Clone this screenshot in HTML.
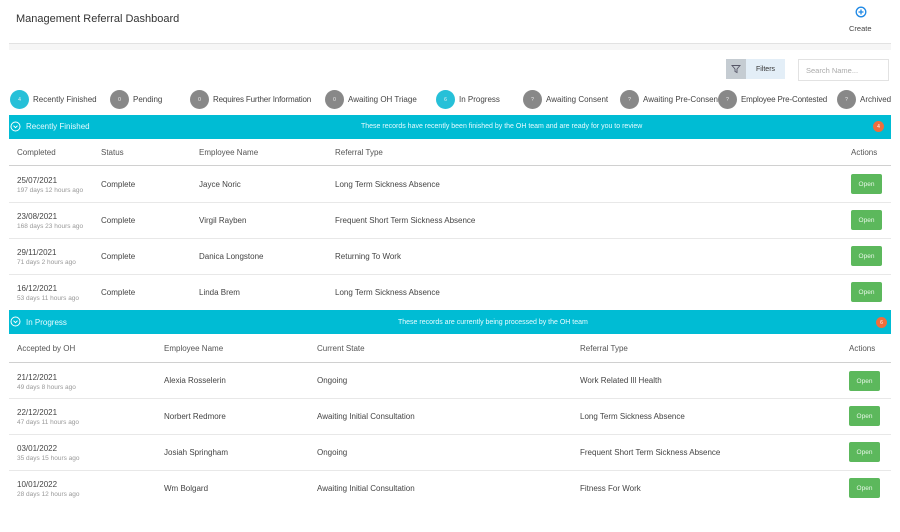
<!DOCTYPE html>
<html><head><meta charset="utf-8"><style>
*{margin:0;padding:0;box-sizing:border-box}
body{width:900px;height:532px;background:#fff;font-family:"Liberation Sans",Arial,sans-serif;color:#333;position:relative;overflow:hidden}
.a{position:absolute;white-space:nowrap}
.t{font-size:8px;color:#444}
.s{font-size:6.5px;color:#999}
.h{font-size:8px;color:#555}
.bar{position:absolute;left:9px;width:882px;height:24px;background:#00bcd4;color:#e6fbff;font-size:8px}
.line{position:absolute;left:9px;width:882px;height:1px;background:#e8e8e8}
.btn{position:absolute;width:31px;height:20px;background:#5cb85c;color:#e8f7e8;font-size:6.5px;display:flex;align-items:center;justify-content:center;border-radius:2px}
.c{position:absolute;width:19px;height:19px;border-radius:50%;color:#eee;font-size:5px;display:flex;align-items:center;justify-content:center}
.g{background:#888}.b{background:#26c0d8}
.badge{position:absolute;width:11px;height:11px;border-radius:50%;background:#ef6e3c;color:#fff;font-size:5px;display:flex;align-items:center;justify-content:center}
</style></head><body>
<div class="a" style="left:16px;top:13px;font-size:11px;color:#333">Management Referral Dashboard</div>
<svg class="a" style="left:855px;top:6px" width="12" height="12" viewBox="0 0 12 12"><circle cx="6" cy="6" r="4.8" fill="none" stroke="#1e88e5" stroke-width="1.3"/><path d="M6 3.5v5M3.5 6h5" stroke="#1e88e5" stroke-width="1.3"/></svg>
<div class="a" style="left:849px;top:24px;font-size:7.5px;color:#444">Create</div>
<div class="a" style="left:9px;top:43px;width:882px;height:1px;background:#e2e2e2"></div>
<div class="a" style="left:9px;top:44px;width:882px;height:6px;background:#f6f6f6"></div>

<div class="a" style="left:726px;top:59px;width:20px;height:20px;background:#c5ccd2"></div>
<svg class="a" style="left:731px;top:64px" width="10" height="10" viewBox="0 0 10 10"><path d="M1 1.5h8L6 5v3.5L4 7.5V5z" fill="none" stroke="#556" stroke-width="0.9"/></svg>
<div class="a" style="left:746px;top:59px;width:39px;height:20px;background:#e3eef7;font-size:7px;color:#333;display:flex;align-items:center;justify-content:center">Filters</div>
<div class="a" style="left:798px;top:59px;width:91px;height:22px;border:1px solid #e2e2e2;font-size:7.5px;color:#aaa;display:flex;align-items:center;padding-left:7px">Search Name...</div>

<div class="c b" style="left:10px;top:90px">4</div><div class="a t" style="left:33px;top:95px">Recently Finished</div>
<div class="c g" style="left:110px;top:90px">0</div><div class="a t" style="left:133px;top:95px">Pending</div>
<div class="c g" style="left:190px;top:90px">0</div><div class="a t" style="left:213px;top:95px;letter-spacing:-0.15px">Requires Further Information</div>
<div class="c g" style="left:325px;top:90px">0</div><div class="a t" style="left:348px;top:95px">Awaiting OH Triage</div>
<div class="c b" style="left:436px;top:90px">6</div><div class="a t" style="left:459px;top:95px">In Progress</div>
<div class="c g" style="left:523px;top:90px">?</div><div class="a t" style="left:546px;top:95px">Awaiting Consent</div>
<div class="a t" style="left:643px;top:95px;width:75px;overflow:hidden">Awaiting Pre-Consent</div>
<div class="c g" style="left:620px;top:90px">?</div>
<div class="c g" style="left:718px;top:90px">?</div><div class="a t" style="left:741px;top:95px;letter-spacing:-0.15px">Employee Pre-Contested</div>
<div class="c g" style="left:837px;top:90px">?</div><div class="a t" style="left:860px;top:95px">Archived</div>

<div class="bar" style="top:115px"></div>
<svg class="a" style="left:10px;top:121px" width="11" height="11" viewBox="0 0 11 11"><circle cx="5.5" cy="5.5" r="4.5" fill="none" stroke="#fff" stroke-width="1"/><path d="M3.5 4.7l2 2 2-2" fill="none" stroke="#fff" stroke-width="1"/></svg>
<div class="a" style="left:26px;top:122px;font-size:8px;color:#e6fbff">Recently Finished</div>
<div class="a" style="left:361px;top:123px;font-size:7px;color:#e6fbff">These records have recently been finished by the OH team and are ready for you to review</div>
<div class="badge" style="left:873px;top:121px">4</div>

<div class="a h" style="left:17px;top:148px">Completed</div>
<div class="a h" style="left:101px;top:148px">Status</div>
<div class="a h" style="left:199px;top:148px">Employee Name</div>
<div class="a h" style="left:335px;top:148px">Referral Type</div>
<div class="a h" style="left:851px;top:148px">Actions</div>
<div class="a" style="left:9px;top:165px;width:882px;height:1px;background:#d0d0d0"></div>

<div class="a t" style="left:17px;top:176px">25/07/2021</div><div class="a s" style="left:17px;top:187px">197 days 12 hours ago</div>
<div class="a t" style="left:101px;top:180px">Complete</div><div class="a t" style="left:199px;top:180px">Jayce Noric</div><div class="a t" style="left:335px;top:180px">Long Term Sickness Absence</div>
<div class="btn" style="left:851px;top:174px">Open</div>
<div class="line" style="top:202px"></div>
<div class="a t" style="left:17px;top:212px">23/08/2021</div><div class="a s" style="left:17px;top:223px">168 days 23 hours ago</div>
<div class="a t" style="left:101px;top:216px">Complete</div><div class="a t" style="left:199px;top:216px">Virgil Rayben</div><div class="a t" style="left:335px;top:216px">Frequent Short Term Sickness Absence</div>
<div class="btn" style="left:851px;top:210px">Open</div>
<div class="line" style="top:238px"></div>
<div class="a t" style="left:17px;top:248px">29/11/2021</div><div class="a s" style="left:17px;top:259px">71 days 2 hours ago</div>
<div class="a t" style="left:101px;top:252px">Complete</div><div class="a t" style="left:199px;top:252px">Danica Longstone</div><div class="a t" style="left:335px;top:252px">Returning To Work</div>
<div class="btn" style="left:851px;top:246px">Open</div>
<div class="line" style="top:274px"></div>
<div class="a t" style="left:17px;top:284px">16/12/2021</div><div class="a s" style="left:17px;top:295px">53 days 11 hours ago</div>
<div class="a t" style="left:101px;top:288px">Complete</div><div class="a t" style="left:199px;top:288px">Linda Brem</div><div class="a t" style="left:335px;top:288px">Long Term Sickness Absence</div>
<div class="btn" style="left:851px;top:282px">Open</div>

<div class="bar" style="top:310px"></div>
<svg class="a" style="left:10px;top:316px" width="11" height="11" viewBox="0 0 11 11"><circle cx="5.5" cy="5.5" r="4.5" fill="none" stroke="#fff" stroke-width="1"/><path d="M3.5 4.7l2 2 2-2" fill="none" stroke="#fff" stroke-width="1"/></svg>
<div class="a" style="left:26px;top:318px;font-size:8px;color:#e6fbff">In Progress</div>
<div class="a" style="left:398px;top:319px;font-size:7px;color:#e6fbff">These records are currently being processed by the OH team</div>
<div class="badge" style="left:876px;top:317px">6</div>

<div class="a h" style="left:17px;top:344px">Accepted by OH</div>
<div class="a h" style="left:164px;top:344px">Employee Name</div>
<div class="a h" style="left:317px;top:344px">Current State</div>
<div class="a h" style="left:580px;top:344px">Referral Type</div>
<div class="a h" style="left:849px;top:344px">Actions</div>
<div class="a" style="left:9px;top:362px;width:882px;height:1px;background:#d0d0d0"></div>

<div class="a t" style="left:17px;top:373px">21/12/2021</div><div class="a s" style="left:17px;top:384px">49 days 8 hours ago</div>
<div class="a t" style="left:164px;top:376px">Alexia Rosselerin</div><div class="a t" style="left:317px;top:376px">Ongoing</div><div class="a t" style="left:580px;top:376px">Work Related Ill Health</div>
<div class="btn" style="left:849px;top:371px">Open</div>
<div class="line" style="top:398px"></div>
<div class="a t" style="left:17px;top:408px">22/12/2021</div><div class="a s" style="left:17px;top:419px">47 days 11 hours ago</div>
<div class="a t" style="left:164px;top:412px">Norbert Redmore</div><div class="a t" style="left:317px;top:412px">Awaiting Initial Consultation</div><div class="a t" style="left:580px;top:412px">Long Term Sickness Absence</div>
<div class="btn" style="left:849px;top:406px">Open</div>
<div class="line" style="top:434px"></div>
<div class="a t" style="left:17px;top:444px">03/01/2022</div><div class="a s" style="left:17px;top:455px">35 days 15 hours ago</div>
<div class="a t" style="left:164px;top:448px">Josiah Springham</div><div class="a t" style="left:317px;top:448px">Ongoing</div><div class="a t" style="left:580px;top:448px">Frequent Short Term Sickness Absence</div>
<div class="btn" style="left:849px;top:442px">Open</div>
<div class="line" style="top:470px"></div>
<div class="a t" style="left:17px;top:480px">10/01/2022</div><div class="a s" style="left:17px;top:491px">28 days 12 hours ago</div>
<div class="a t" style="left:164px;top:484px">Wm Bolgard</div><div class="a t" style="left:317px;top:484px">Awaiting Initial Consultation</div><div class="a t" style="left:580px;top:484px">Fitness For Work</div>
<div class="btn" style="left:849px;top:478px">Open</div>
</body></html>
